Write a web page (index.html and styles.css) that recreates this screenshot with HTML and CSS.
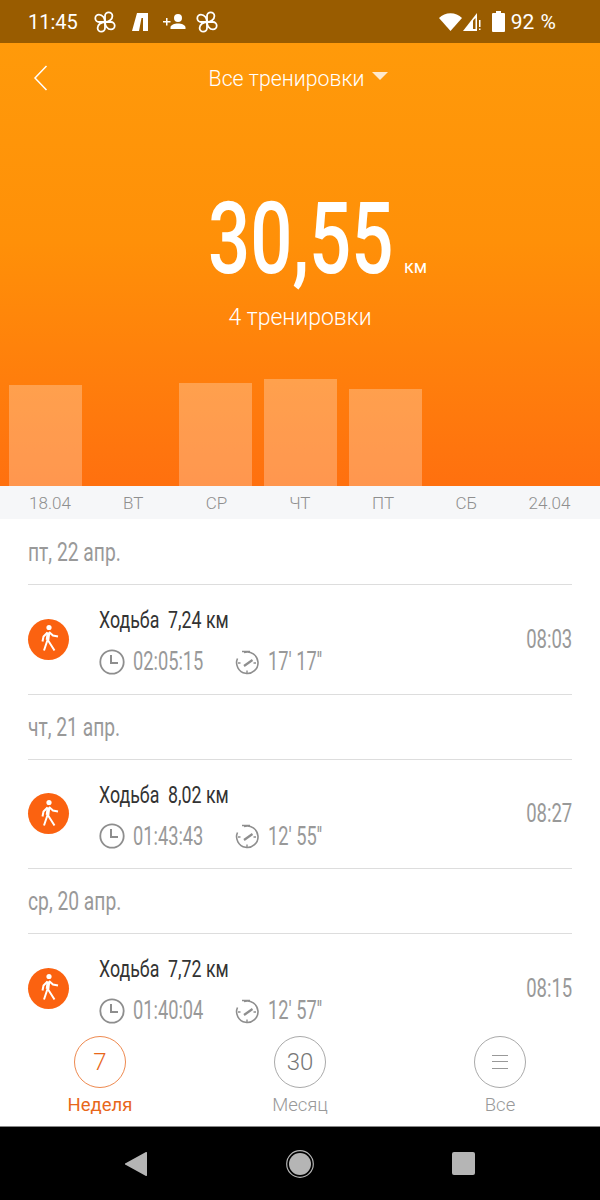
FILE: index.html
```html
<!DOCTYPE html>
<html lang="ru">
<head>
    <meta charset="UTF-8">
    <meta name="viewport" content="width=device-width, initial-scale=1.0">
    <title>Все тренировки</title>
    <link rel="stylesheet" href="styles.css">
</head>
<body>
    <svg class="sprites" width="0" height="0">
        <symbol id="pinwheel" viewBox="0 0 24 24">
            <g fill="none" stroke="currentColor" stroke-width="1.800" stroke-linejoin="round">
                <path d="M12 12V6a3.700 3.700 0 0 1 7.400 0c0 3.300-3.400 6-7.400 6z"/>
                <path d="M12 12V6a3.700 3.700 0 0 1 7.400 0c0 3.300-3.400 6-7.400 6z" transform="rotate(90 12 12)"/>
                <path d="M12 12V6a3.700 3.700 0 0 1 7.400 0c0 3.300-3.400 6-7.400 6z" transform="rotate(180 12 12)"/>
                <path d="M12 12V6a3.700 3.700 0 0 1 7.400 0c0 3.300-3.400 6-7.400 6z" transform="rotate(270 12 12)"/>
            </g>
        </symbol>
        <symbol id="walker" viewBox="0 0 40 40">
            <circle cx="20" cy="8.500" r="2.600" fill="#fff"/>
            <path d="M19.500 13.500L18.500 21" fill="none" stroke="#fff" stroke-width="3.600"/>
            <path d="M18.500 21L15 31.500M18.500 20.500L25.500 31.500M20 13l4 3.500 5 1M18.500 13.500L14.500 17.500 13.500 22.500" fill="none" stroke="#fff" stroke-width="2"/>
        </symbol>
        <symbol id="clock" viewBox="0 0 26 26">
            <circle cx="13" cy="13" r="11.700" fill="none" stroke="currentColor" stroke-width="1.800"/>
            <path d="M12 6v8h7" fill="none" stroke="currentColor" stroke-width="2"/>
        </symbol>
        <symbol id="pace" viewBox="0 0 26 26">
            <path d="M10 3.600A10.700 10.700 0 1 1 3.500 9.500M8 2.500h8" fill="none" stroke="currentColor" stroke-width="1.600"/>
            <path d="M4 14h2.500M13 24v-2.500M22 14h-2.500" fill="none" stroke="currentColor" stroke-width="1.400"/>
            <path d="M10 17l8.500-6" fill="none" stroke="currentColor" stroke-width="2.200"/>
        </symbol>
    </svg>

    <div class="status-bar">
        <span class="clock-text">11:45</span>
        <svg width="24" height="24"><use href="#pinwheel"/></svg>
        <svg width="16" height="18" viewBox="0 0 16 18"><path d="M5 0h11v18h-5V5H9.500L7 18H0z" fill="currentColor"/></svg>
        <svg width="24" height="18" viewBox="0 0 24 18"><path d="M0 8h3V5h1.500v3h3v1.500h-3v3H3v-3H0zM15 1a4 4 0 1 1 0 8 4 4 0 0 1 0-8zM7.500 14.500c0-2.500 4-4 7.500-4s7.500 1.500 7.500 4V16h-15z" fill="currentColor"/></svg>
        <svg class="st-tight" width="24" height="24"><use href="#pinwheel"/></svg>
        <span class="status-gap"></span>
        <svg class="wifi" width="23" height="18" viewBox="0 0 23 18"><path d="M0 5C6-1.500 17-1.500 23 5L11.500 18z" fill="currentColor"/></svg>
        <svg class="signal" width="19" height="20" viewBox="0 0 19 20"><path d="M14 1v18H0z" fill="currentColor"/><path d="M10 8.500V17h2.500V6z" fill="#995c00"/><path d="M16 8h1.500v7H16zM16 16.500h1.500V18H16z" fill="currentColor"/></svg>
        <svg class="battery" width="13" height="21" viewBox="0 0 13 21"><path d="M4 0h5v2h3a1 1 0 0 1 1 1v17a1 1 0 0 1-1 1H1a1 1 0 0 1-1-1V3a1 1 0 0 1 1-1h3z" fill="currentColor"/></svg>
        <span class="percent">92 %</span>
    </div>

    <div class="hero">
        <div class="topbar">
            <svg class="back" width="16" height="26" viewBox="0 0 16 26"><path d="M13.500 1L2 13l11.500 12" fill="none" stroke="currentColor" stroke-width="1.500"/></svg>
            <span class="topbar-title">Все тренировки</span>
            <span class="caret"></span>
        </div>
        <div class="total">
            <span class="total-num">30,55</span>
            <span class="total-unit">км</span>
        </div>
        <div class="total-sub">4 тренировки</div>
        <div class="bars">
            <div class="bar" style="height:101px"></div>
            <div class="bar bar-empty"></div>
            <div class="bar" style="height:103px"></div>
            <div class="bar" style="height:107px"></div>
            <div class="bar" style="height:97px"></div>
            <div class="bar bar-empty"></div>
            <div class="bar bar-empty"></div>
        </div>
    </div>

    <div class="axis">
        <span>18.04</span><span>ВТ</span><span>СР</span><span>ЧТ</span><span>ПТ</span><span>СБ</span><span>24.04</span>
    </div>

    <div class="list">
        <div class="day"><span class="day-text">пт, 22 апр.</span></div>
        <div class="row">
            <div class="badge"><svg width="40" height="40"><use href="#walker"/></svg></div>
            <div class="row-body">
                <div class="row-title">Ходьба&nbsp; 7,24 км</div>
                <div class="row-stats">
                    <svg width="26" height="26"><use href="#clock"/></svg>
                    <div class="stat-box"><span class="stat">02:05:15</span></div>
                    <svg width="26" height="26"><use href="#pace"/></svg>
                    <div class="stat-box"><span class="stat">17' 17''</span></div>
                </div>
            </div>
            <div class="row-when">08:03</div>
        </div>
        <div class="day"><span class="day-text">чт, 21 апр.</span></div>
        <div class="row">
            <div class="badge"><svg width="40" height="40"><use href="#walker"/></svg></div>
            <div class="row-body">
                <div class="row-title">Ходьба&nbsp; 8,02 км</div>
                <div class="row-stats">
                    <svg width="26" height="26"><use href="#clock"/></svg>
                    <div class="stat-box"><span class="stat">01:43:43</span></div>
                    <svg width="26" height="26"><use href="#pace"/></svg>
                    <div class="stat-box"><span class="stat">12' 55''</span></div>
                </div>
            </div>
            <div class="row-when">08:27</div>
        </div>
        <div class="day"><span class="day-text">ср, 20 апр.</span></div>
        <div class="row">
            <div class="badge"><svg width="40" height="40"><use href="#walker"/></svg></div>
            <div class="row-body">
                <div class="row-title">Ходьба&nbsp; 7,72 км</div>
                <div class="row-stats">
                    <svg width="26" height="26"><use href="#clock"/></svg>
                    <div class="stat-box"><span class="stat">01:40:04</span></div>
                    <svg width="26" height="26"><use href="#pace"/></svg>
                    <div class="stat-box"><span class="stat">12' 57''</span></div>
                </div>
            </div>
            <div class="row-when">08:15</div>
        </div>
    </div>

    <div class="tabs">
        <div class="tab tab-active">
            <div class="tab-circle">7</div>
            <div class="tab-label">Неделя</div>
        </div>
        <div class="tab">
            <div class="tab-circle">30</div>
            <div class="tab-label">Месяц</div>
        </div>
        <div class="tab">
            <div class="tab-circle"><span class="burger"></span></div>
            <div class="tab-label">Все</div>
        </div>
    </div>

    <div class="navbar">
        <svg width="24" height="24" viewBox="0 0 24 24"><path d="M23 1v22a1 1 0 0 1-1.500.8L2 13a1 1 0 0 1 0-2L21.500.2A1 1 0 0 1 23 1z" fill="#b5b5b5"/></svg>
        <svg width="28" height="28" viewBox="0 0 28 28"><circle cx="14" cy="14" r="13.300" fill="none" stroke="#b5b5b5" stroke-width="1.200"/><circle cx="14" cy="14" r="11" fill="#b5b5b5"/></svg>
        <div class="nav-square"></div>
    </div>
</body>
</html>
```

FILE: styles.css
```css
* {
    box-sizing: border-box;
}

html, body {
    margin: 0;
    height: 1200px;
    overflow: hidden;
}

body {
    display: flex;
    flex-direction: column;
    background: #fff;
    font-family: Roboto, "Noto Sans", sans-serif;
}

.sprites {
    position: absolute;
}

.status-bar {
    height: 43px;
    flex: none;
    background: #995c00;
    color: #fff;
    display: flex;
    align-items: center;
    padding: 0 44px 0 28px;
    gap: 15px;
}

.clock-text {
    font-size: 20px;
}

.st-tight {
    margin-left: -7px;
}

.status-gap {
    flex: 1;
}

.wifi {
    margin-right: -14px;
}

.battery {
    margin-left: -5px;
    margin-right: -9px;
}

.percent {
    font-size: 21px;
    word-spacing: 1px;
}

.hero {
    height: 443px;
    flex: none;
    background: linear-gradient(180deg, #ff9a0a, #ff9008 45%, #ff700f);
    color: #fff;
    display: flex;
    flex-direction: column;
    align-items: center;
}

.topbar {
    width: 100%;
    height: 70px;
    flex: none;
    display: flex;
    align-items: center;
    justify-content: center;
    position: relative;
    font-size: 21.300px;
    font-weight: 300;
    padding-right: 3px;
}

.back {
    position: absolute;
    left: 33px;
    top: 22px;
}

.caret {
    width: 0;
    height: 0;
    margin-left: 8px;
    margin-top: -5px;
    border-left: 8px solid transparent;
    border-right: 8px solid transparent;
    border-top: 8px solid #ffe9cc;
}

.total {
    margin-top: 70px;
    height: 112px;
    display: flex;
    align-items: baseline;
    padding-left: 35px;
}

.total-num {
    font-size: 101px;
    font-weight: 500;
    line-height: 112px;
    width: 196px;
    white-space: nowrap;
    transform: scaleX(.735);
    transform-origin: left;
}

.total-unit {
    font-size: 18px;
}

.total-sub {
    margin-top: 9px;
    font-size: 23px;
    font-weight: 300;
}

.bars {
    margin-top: auto;
    width: 100%;
    padding-left: 9px;
    display: flex;
    align-items: flex-end;
    gap: 12px;
}

.bar {
    width: 73px;
    background: rgba(255, 255, 255, .27);
}

.bar-empty {
    height: 0;
}

.axis {
    height: 33px;
    flex: none;
    background: #f6f7f9;
    color: #8f8f8f;
    font-size: 17px;
    font-weight: 300;
    display: grid;
    grid-template-columns: repeat(7, 73px);
    column-gap: 10.250px;
    padding-left: 13.500px;
    align-items: center;
    text-align: center;
}

.list {
    flex: 1;
    min-height: 0;
    overflow: hidden;
    padding: 1px 28px 0;
}

.day {
    height: 65px;
    border-bottom: 1px solid #ddd;
    padding-top: 18px;
}

.day-text {
    display: inline-block;
    color: #999;
    font-size: 25px;
    white-space: nowrap;
    transform: scaleX(.77);
    transform-origin: left;
}

.row {
    height: 109.500px;
    border-bottom: 1px solid #ddd;
    display: flex;
    align-items: center;
}

.badge {
    width: 41px;
    height: 41px;
    flex: none;
    border-radius: 50%;
    background: #fb6210;
    display: flex;
    align-items: center;
    justify-content: center;
    margin-right: 30px;
}

.row-body {
    flex: 1;
    min-width: 0;
    padding-top: 4px;
}

.row-title {
    font-size: 24px;
    color: #333;
    margin-bottom: 11px;
    white-space: nowrap;
    transform: scaleX(.74);
    transform-origin: left;
}

.row-stats {
    display: flex;
    align-items: center;
    color: #8e8e8e;
    gap: 8px;
    padding-top: 2px;
}

.stat-box {
    width: 93px;
}

.stat {
    display: inline-block;
    color: #999;
    font-size: 25px;
    white-space: nowrap;
    transform: scaleX(.73);
    transform-origin: left;
}

.row-when {
    color: #999;
    font-size: 25px;
    transform: scaleX(.74);
    transform-origin: right;
}

.tabs {
    position: relative;
    height: 100px;
    flex: none;
    background: #fff;
    border-bottom: 1px solid #888;
    display: flex;
    justify-content: space-between;
    padding: 9px 40px 0;
    color: #999;
}

.tab {
    width: 120px;
    display: flex;
    flex-direction: column;
    align-items: center;
}

.tab-circle {
    width: 52px;
    height: 52px;
    border-radius: 50%;
    border: 1px solid #aaa;
    display: flex;
    align-items: center;
    justify-content: center;
    font-size: 24px;
    font-weight: 300;
    color: #777;
}

.tab-label {
    margin-top: 6px;
    font-size: 18.500px;
    font-weight: 300;
}

.tab-active {
    color: #e8671a;
}

.tab-active .tab-label {
    font-weight: 400;
}

.tab-active .tab-circle {
    border-color: #ee8a50;
    color: #e8671a;
}

.burger {
    width: 16px;
    height: 14px;
    border-top: 1.500px solid #999;
    border-bottom: 1.500px solid #999;
    position: relative;
}

.burger::after {
    content: "";
    position: absolute;
    left: 0;
    right: 0;
    top: 4.500px;
    border-top: 1.500px solid #999;
}

.navbar {
    height: 73px;
    flex: none;
    background: #000;
    display: flex;
    align-items: center;
    padding-left: 124px;
    gap: 138px;
}

.nav-square {
    width: 23px;
    height: 23px;
    border-radius: 2px;
    background: #b5b5b5;
}
```
